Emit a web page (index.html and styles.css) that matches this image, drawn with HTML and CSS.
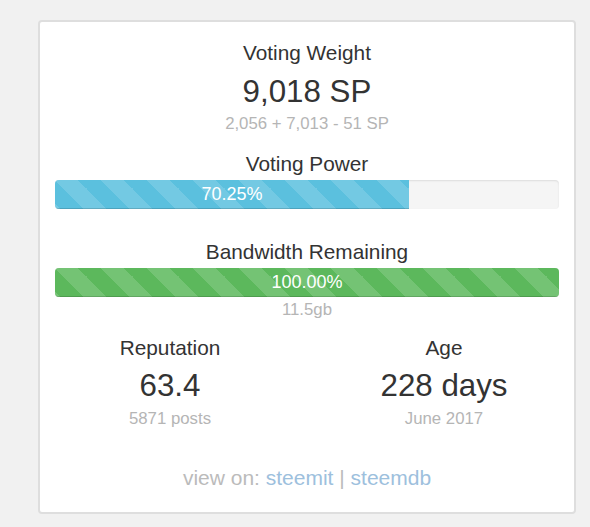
FILE: index.html
```html
<!DOCTYPE html>
<html>
<head>
<meta charset="utf-8">
<link rel="stylesheet" href="styles.css">
</head>
<body>
<div class="card">
  <div class="title t-first">Voting Weight</div>
  <div class="big big-first">9,018 SP</div>
  <div class="sub sub-first">2,056 + 7,013 - 51 SP</div>

  <div class="title t-vp">Voting Power</div>
  <div class="progress">
    <div class="bar bar-info" style="width:70.25%">70.25%</div>
  </div>

  <div class="title t-bw">Bandwidth Remaining</div>
  <div class="progress">
    <div class="bar bar-success" style="width:100%">100.00%</div>
  </div>
  <div class="sub sub-bw">11.5gb</div>

  <div class="cols">
    <div class="col">
      <div class="title">Reputation</div>
      <div class="big big-col">63.4</div>
      <div class="sub sub-col">5871 posts</div>
    </div>
    <div class="col">
      <div class="title">Age</div>
      <div class="big big-col">228 days</div>
      <div class="sub sub-col">June 2017</div>
    </div>
  </div>

  <div class="links">view on: <a href="#">steemit</a> | <a href="#">steemdb</a></div>
</div>
</body>
</html>
```
FILE: styles.css
```css
html, body {
  margin: 0;
  padding: 0;
}
body {
  background: #f1f1f1;
  font-family: "Liberation Sans", Arial, sans-serif;
  color: #333;
  width: 590px;
  height: 527px;
  overflow: hidden;
}
.card {
  box-sizing: border-box;
  margin: 20px 0 0 38px;
  width: 538px;
  height: 494px;
  background: #fff;
  border: 2px solid #dedede;
  border-radius: 4px;
  padding: 20px 15px 0 15px;
  text-align: center;
}
.title {
  font-size: 20.8px;
  line-height: 22px;
}
.big {
  font-size: 31.3px;
  line-height: 33px;
}
.big-first { margin-top: 11px; }
.sub {
  font-size: 16.8px;
  line-height: 20px;
  color: #b5b5b5;
}
.sub-first { margin-top: 6px; }
.t-vp { margin-top: 19px; }
.t-bw { margin-top: 32px; }
.progress {
  margin-top: 5px;
  height: 29px;
  background: #f5f5f5;
  border-radius: 4px;
  box-shadow: inset 0 1px 2px rgba(0,0,0,0.1);
  overflow: hidden;
  display: flex;
}
.bar {
  height: 29px;
  line-height: 29px;
  font-size: 18px;
  color: #fff;
  text-align: center;
  box-shadow: inset 0 -1px 0 rgba(0,0,0,0.15);
  background-size: 46px 46px;
}
.bar-info {
  background-color: #5bc0de;
  background-image: linear-gradient(45deg, rgba(255,255,255,.15) 25%, transparent 25%, transparent 50%, rgba(255,255,255,.15) 50%, rgba(255,255,255,.15) 75%, transparent 75%, transparent);
}
.bar-success {
  background-color: #5cb85c;
  background-image: linear-gradient(45deg, rgba(255,255,255,.15) 25%, transparent 25%, transparent 50%, rgba(255,255,255,.15) 50%, rgba(255,255,255,.15) 75%, transparent 75%, transparent);
}
.sub-bw { margin-top: 3px; }
.cols {
  display: grid;
  grid-template-columns: 1fr 1fr;
  margin: 17px -22px 0 -22px;
}
.big-col { margin-top: 10px; }
.sub-col { margin-top: 7px; }
.links {
  margin-top: 37px;
  font-size: 21px;
  line-height: 24px;
  color: #bbb;
}
.links a {
  color: #9dc0dd;
  text-decoration: none;
}
```
